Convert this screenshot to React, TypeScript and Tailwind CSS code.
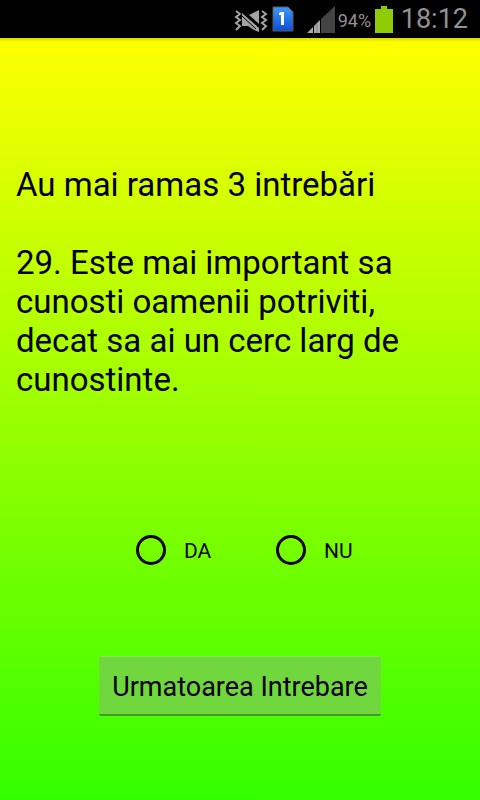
import { useState } from "react";

function SilentIcon() {
  return (
    <svg width="34" height="22" viewBox="0 0 34 22" aria-label="Silent" fill="none">
      <path d="M2 1L6 4L2 7L6 10L2 13L6 16L2 20" stroke="#a3a3a3" strokeWidth="2" />
      <path d="M28 1L32 4L28 7L32 10L28 13L32 16L28 20" stroke="#a3a3a3" strokeWidth="2" />
      <path d="M8 6L19 16H8Z" fill="#a3a3a3" />
      <path d="M15 5L25 0V14Z" fill="#a3a3a3" />
      <path d="M8 3L26 19" stroke="#000" strokeWidth="5" />
      <path d="M8 7V16H14L20 20L25 22V18L8 3Z" fill="#a3a3a3" />
      <path d="M8 6L22 19" stroke="#000" />
    </svg>
  );
}

function SimIcon() {
  return (
    <svg width="22" height="26" viewBox="0 0 22 26" aria-label="SIM 1">
      <defs>
        <linearGradient id="sim" x1="0" y1="0" x2="0" y2="1">
          <stop offset="0" stopColor="#3c9af4" />
          <stop offset="1" stopColor="#0c4ed4" />
        </linearGradient>
      </defs>
      <path d="M1 1H16L21 6V25H1Z" fill="url(#sim)" stroke="#5c5c5c" />
      <path d="M7 7L9 6H12V19H9V9H7Z" fill="#fff" />
    </svg>
  );
}

function SignalIcon() {
  return (
    <svg width="28" height="27" viewBox="0 0 28 27" aria-label="Signal">
      <path d="M14 27V13L28 0V27Z" fill="#444" />
      <path d="M0 27L6 21V27Z" fill="#a8a8a8" />
      <path d="M7 27V20L13 14V27Z" fill="#a8a8a8" />
      <path d="M10 17V27" stroke="#888" />
    </svg>
  );
}

function BatteryIcon() {
  return (
    <svg width="18" height="27" viewBox="0 0 18 27" aria-label="Battery">
      <path d="M6 0H12V3H18V27H0V3H6Z" fill="#8fcb04" />
    </svg>
  );
}

function StatusBar() {
  return (
    <header className="flex h-[38px] items-center justify-end bg-black pr-3">
      <span className="mr-1 pt-1"><SilentIcon /></span>
      <SimIcon />
      <span className="ml-[13px]"><SignalIcon /></span>
      <span className="ml-[3px] w-[37px] pt-0.5 text-[18px] text-[#929292]">94%</span>
      <BatteryIcon />
      <time className="ml-2 text-[27px] leading-9 text-[#929292]">18:12</time>
    </header>
  );
}

const answers = ["DA", "NU"];

export default function App() {
  const [answer, setAnswer] = useState("");
  return (
    <div className="flex min-h-screen flex-col font-['Roboto',sans-serif] text-black">
      <StatusBar />
      <main className="flex flex-1 flex-col bg-linear-to-b/srgb from-[#ffff00] to-[#33ff00]">
        <div className="h-1 bg-linear-to-b from-black/15 to-transparent" />
        <div className="mt-[123px] px-4 text-[33px] leading-[39px]">
          <p>Au mai ramas 3 intrebări</p>
          <p className="mt-[39px]">
            29. Este mai important sa cunosti oamenii potriviti, decat sa ai un cerc larg de cunostinte.
          </p>
        </div>
        <fieldset className="mt-[136px] ml-2 flex justify-center gap-[64px]">
          {answers.map((label) => (
            <label key={label} className="flex h-[30px] w-[76px] items-center gap-[18px] text-[21px] leading-7">
              <input
                type="radio"
                name="answer"
                value={label}
                checked={answer === label}
                onChange={() => setAnswer(label)}
                className="size-[30px] shrink-0 appearance-none rounded-full border-3 border-black checked:bg-black/40"
              />
              <span className="pt-0.5">{label}</span>
            </label>
          ))}
        </fieldset>
        <button
          type="button"
          className="mt-[91px] mb-21 h-[60px] self-center rounded-xs border-t border-b-2 border-t-[#8ee063] border-b-[#489928] bg-[#70d73f] px-[13px] pt-1 text-[27px]"
        >
          Urmatoarea Intrebare
        </button>
      </main>
    </div>
  );
}
